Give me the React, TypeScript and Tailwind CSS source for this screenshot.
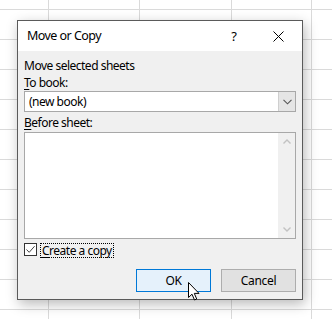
import React from "react";

const font = { fontFamily: '"Noto Sans", "Open Sans", sans-serif' };

export default function App() {
  return (
    <div
      className="relative w-[332px] h-[319px] overflow-hidden bg-white text-[12px] text-black"
      style={font}
    >
      {/* spreadsheet grid */}
      <div className="flex h-full bg-[linear-gradient(to_bottom,#dadada_1px,transparent_1px)] bg-[length:100%_30px] bg-[position:0_9px]">
        <div className="w-[49px] h-full border-r border-[#dadada]" />
        <div className="w-[91px] h-full border-r border-[#dadada]" />
        <div className="w-[92px] h-full border-r border-[#dadada]" />
        <div className="w-[80px] h-full border-r border-[#dadada]" />
        <div className="flex-1 h-full" />
      </div>

      {/* dialog */}
      <div className="absolute left-[17px] top-[20px] w-[286px] h-[280px] border border-[#5a5a5a] bg-[#f0f0f0] shadow-[2px_4px_12px_rgba(0,0,0,0.28)] flex flex-col">
        {/* title bar */}
        <div className="h-[30px] bg-white flex items-center pl-[9px] shrink-0">
          <span className="text-[12.5px] leading-none tracking-[-0.55px]">Move or Copy</span>
          <span className="ml-auto mr-[36px] text-[13px] leading-none">?</span>
          <svg width="11" height="11" viewBox="0 0 11 11" className="mr-[18px]">
            <path d="M0.5 0.5 L10.5 10.5 M10.5 0.5 L0.5 10.5" stroke="#000" strokeWidth="1" />
          </svg>
        </div>

        {/* body */}
        <div className="flex flex-col px-[6px] pt-[7px]">
          <div className="leading-[15px] tracking-[-0.5px]">Move selected sheets</div>
          <div className="leading-[15px] mt-[2px] tracking-[-0.5px]">
            <span className="underline underline-offset-2">T</span>o book:
          </div>
          <div className="mt-[1px] h-[21px] w-[272px] border border-[#a8a8a8] bg-white flex items-center">
            <span className="pl-[4px] tracking-[-0.5px]">(new book)</span>
            <div className="ml-auto h-full w-[17px] bg-[#e5e5e5] border-l border-[#cfcfcf] flex items-center justify-center">
              <svg width="9" height="6" viewBox="0 0 9 6">
                <path d="M0.5 0.8 L4.5 4.8 L8.5 0.8" fill="none" stroke="#555" strokeWidth="1.1" />
              </svg>
            </div>
          </div>
          <div className="leading-[15px] mt-[3px] tracking-[-0.5px]">
            <span className="underline underline-offset-2">B</span>efore sheet:
          </div>
          <div className="mt-[2px] h-[107px] w-[272px] border border-[#a8a8a8] bg-white flex">
            <div className="flex-1" />
            <div className="w-[17px] h-full bg-[#f0f0f0] flex flex-col items-center justify-between py-[6px]">
              <svg width="8" height="5" viewBox="0 0 8 5">
                <path d="M0.5 4.5 L4 1 L7.5 4.5" fill="none" stroke="#c2c2c2" strokeWidth="1.4" />
              </svg>
              <svg width="8" height="5" viewBox="0 0 8 5">
                <path d="M0.5 0.5 L4 4 L7.5 0.5" fill="none" stroke="#c2c2c2" strokeWidth="1.4" />
              </svg>
            </div>
          </div>

          {/* checkbox */}
          <div className="mt-[4px] flex items-start h-[15px]">
            <div className="w-[13px] h-[13px] border border-[#333] bg-white flex items-center justify-center">
              <svg width="11" height="11" viewBox="0 0 11 11">
                <path d="M1.5 5.5 L4.2 8.3 L9.6 2.2" fill="none" stroke="#444" strokeWidth="1" />
              </svg>
            </div>
            <div className="ml-[3px] h-[15px] border border-dotted border-black px-[1px] leading-[13px] tracking-[-0.5px]">
              <span className="underline underline-offset-2">C</span>reate a copy
            </div>
          </div>

          {/* buttons */}
          <div className="mt-[11px] flex justify-end gap-[10px]">
            <button className="w-[75px] h-[23px] border border-[#0078d7] bg-[#e5f1fb] text-[12px] tracking-[-0.3px]">
              OK
            </button>
            <button className="w-[75px] h-[23px] border border-[#adadad] bg-[#e1e1e1] text-[12px] tracking-[-0.3px]">
              Cancel
            </button>
          </div>
        </div>
      </div>

      {/* mouse cursor */}
      <svg
        width="13"
        height="20"
        viewBox="0 0 13 20"
        className="absolute left-[188px] top-[282px]"
      >
        <path
          d="M0.5 0.5 L0.5 15.5 L4 12.2 L6.5 18 L8.7 17 L6.3 11.4 L11 11.4 Z"
          fill="#fff"
          stroke="#000"
          strokeWidth="1"
          strokeLinejoin="round"
        />
      </svg>
    </div>
  );
}
